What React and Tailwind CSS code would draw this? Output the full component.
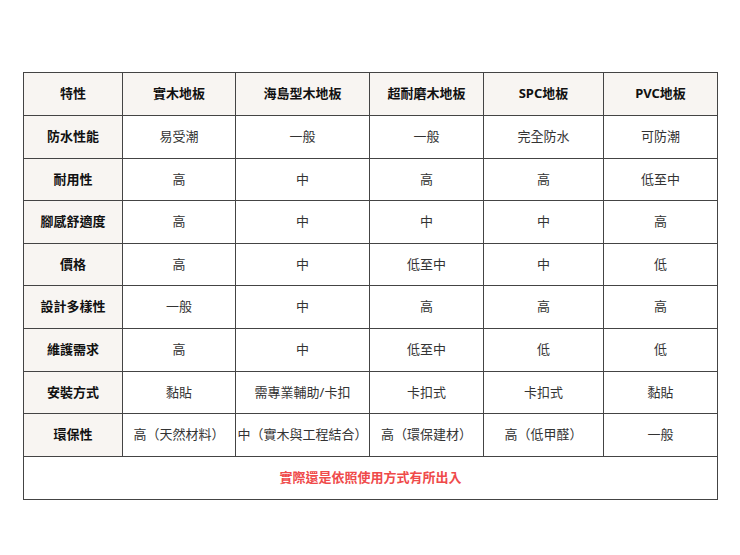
const headers = ["特性", "實木地板", "海島型木地板", "超耐磨木地板", "SPC地板", "PVC地板"];

const rows = [
  ["防水性能", "易受潮", "一般", "一般", "完全防水", "可防潮"],
  ["耐用性", "高", "中", "高", "高", "低至中"],
  ["腳感舒適度", "高", "中", "中", "中", "高"],
  ["價格", "高", "中", "低至中", "中", "低"],
  ["設計多樣性", "一般", "中", "高", "高", "高"],
  ["維護需求", "高", "中", "低至中", "低", "低"],
  ["安裝方式", "黏貼", "需專業輔助/卡扣", "卡扣式", "卡扣式", "黏貼"],
  ["環保性", "高（天然材料）", "中（實木與工程結合）", "高（環保建材）", "高（低甲醛）", "一般"],
];

const widths = ["w-[99px]", "w-[113px]", "w-[134px]", "w-[114px]", "w-[120px]", "w-[114px]"];

export default function App() {
  return (
    <div
      className="w-[740px] h-[555px] bg-white pt-[72px] pl-[23px]"
      style={{ fontFamily: '"Noto Sans", "Noto Sans CJK TC", sans-serif' }}
    >
      <table className="border-collapse table-fixed w-[695px] text-[13px]">
        <colgroup>
          {widths.map((w, i) => (
            <col key={i} className={w} />
          ))}
        </colgroup>
        <thead>
          <tr className="h-[43px]">
            {headers.map((h) => (
              <th key={h} className="border border-[#444] bg-[#f8f5f2] font-bold text-[#111] text-center p-0">
                {h}
              </th>
            ))}
          </tr>
        </thead>
        <tbody>
          {rows.map((row) => (
            <tr key={row[0]} className="h-[42.6px]">
              {row.map((cell, i) =>
                i === 0 ? (
                  <td key={i} className="border border-[#444] bg-[#f8f5f2] font-bold text-[#111] text-center p-0">
                    {cell}
                  </td>
                ) : (
                  <td key={i} className="border border-[#444] text-[#333] text-center p-0 whitespace-nowrap overflow-visible">
                    {cell}
                  </td>
                )
              )}
            </tr>
          ))}
          <tr className="h-[43px]">
            <td colSpan={6} className="border border-[#444] text-center font-bold text-[#ef4a4a] p-0">
              實際還是依照使用方式有所出入
            </td>
          </tr>
        </tbody>
      </table>
    </div>
  );
}
